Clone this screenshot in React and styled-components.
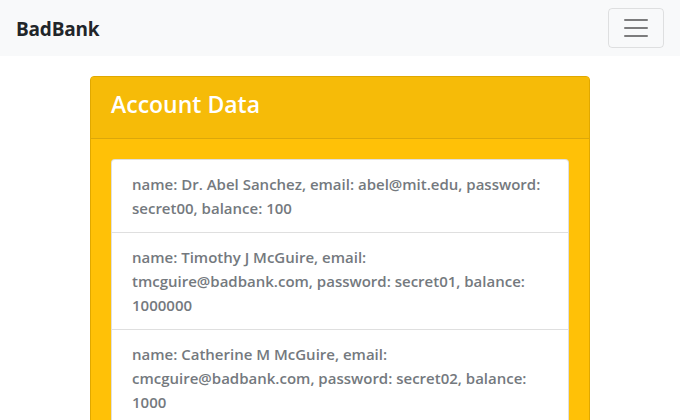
import React from "react";
import styled, { createGlobalStyle } from "styled-components";

const Global = createGlobalStyle`
  html, body { margin: 0; padding: 0; background: #fff; }
  body { font-family: "Open Sans", "Noto Sans", sans-serif; }
  * { box-sizing: border-box; }
`;

const Navbar = styled.nav`
  height: 56px;
  background: #f8f9fa;
  display: flex;
  align-items: center;
  justify-content: space-between;
  padding: 2px 16px 0;
`;

const Brand = styled.a`
  font-size: 19px;
  font-weight: 700;
  color: #212529;
  text-decoration: none;
  letter-spacing: -0.2px;
`;

const Toggler = styled.button`
  width: 56px;
  height: 40px;
  margin-top: -2px;
  border: 1px solid rgba(0, 0, 0, 0.1);
  border-radius: 4px;
  background: transparent;
  display: flex;
  align-items: center;
  justify-content: center;
  padding: 0;
`;

const Main = styled.main`
  display: flex;
  justify-content: center;
  padding-top: 20px;
`;

const Card = styled.section`
  width: 500px;
  border: 1px solid #e0a800;
  border-radius: 4px;
  background: #ffc107;
  overflow: hidden;
`;

const CardHeader = styled.header`
  background: #f6bb08;
  border-bottom: 1px solid #dba70b;
  padding: 10px 20px 17px;
  color: #fff;
  font-size: 23px;
  font-weight: 600;
  line-height: 34px;
`;

const CardBody = styled.div`
  padding: 20px;
`;

const List = styled.ul`
  list-style: none;
  margin: 0;
  padding: 0;
  background: #fff;
  border: 1px solid rgba(0, 0, 0, 0.125);
  border-radius: 4px;
`;

const Item = styled.li`
  padding: 12px 20px;
  font-size: 15px;
  line-height: 24px;
  font-weight: 600;
  color: #74797e;
  & + & { border-top: 1px solid rgba(0, 0, 0, 0.125); }
`;

const users = [
  { name: "Dr. Abel Sanchez", email: "abel@mit.edu", password: "secret00", balance: 100 },
  { name: "Timothy J McGuire", email: "tmcguire@badbank.com", password: "secret01", balance: 1000000 },
  { name: "Catherine M McGuire", email: "cmcguire@badbank.com", password: "secret02", balance: 1000 },
];

export default function App() {
  return (
    <>
      <Global />
      <Navbar>
        <Brand href="#">BadBank</Brand>
        <Toggler aria-label="Toggle navigation">
          <svg width="30" height="30" viewBox="0 0 30 30">
            <path d="M4 7h22M4 15h22M4 23h22" stroke="rgba(0,0,0,0.5)" strokeWidth="2" strokeLinecap="round" />
          </svg>
        </Toggler>
      </Navbar>
      <Main>
        <Card>
          <CardHeader>Account Data</CardHeader>
          <CardBody>
            <List>
              {users.map((u) => (
                <Item key={u.email}>
                  name: {u.name}, email: {u.email}, password: {u.password}, balance: {u.balance}
                </Item>
              ))}
            </List>
          </CardBody>
        </Card>
      </Main>
    </>
  );
}
